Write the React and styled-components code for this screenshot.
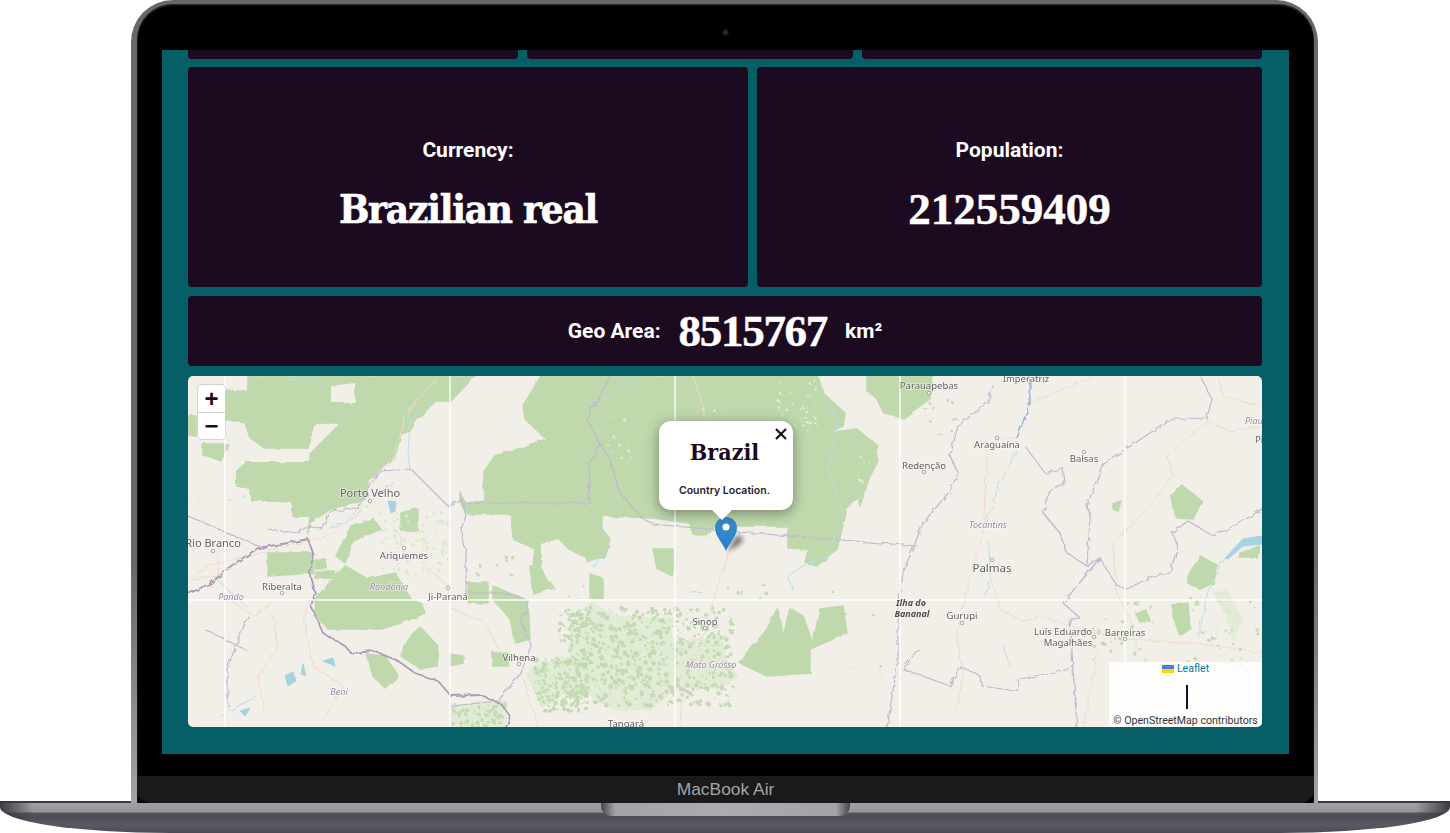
import React from 'react';
import styled, { createGlobalStyle } from 'styled-components';

const GlobalStyle = createGlobalStyle`
  html, body {
    margin: 0;
    background: #fff;
    overflow: hidden;
  }
  body {
    font-family: Roboto, "Liberation Sans", sans-serif;
  }
`;

const Page = styled.div`
  width: 1450px;
  height: 833px;
  overflow: hidden;
`;

const Lid = styled.div`
  position: relative;
  z-index: 1;
  box-sizing: border-box;
  width: 1187px;
  height: 803px;
  margin-left: 131px;
  padding: 4px 4px 0 6px;
  border-radius: 42px 42px 0 0;
  background: linear-gradient(180deg, #67686c 0%, #66676b 70%, #a3a4a8 100%);
`;

const Bezel = styled.div`
  position: relative;
  height: 100%;
  padding-top: 46px;
  box-sizing: border-box;
  border-radius: 36px 36px 0 0;
  background: #000;
  box-shadow: inset 0 1px 2px #3a3a3c;
  display: flex;
  flex-direction: column;
  align-items: center;
`;

const Camera = styled.span`
  position: absolute;
  top: 25px;
  left: 585px;
  width: 7px;
  height: 7px;
  border-radius: 50%;
  background: radial-gradient(circle, #23283a 30%, #0d0d10 70%);
`;

const Screen = styled.div`
  box-sizing: border-box;
  width: 1127px;
  height: 704px;
  padding: 0 27px 27px 26px;
  background: #065f66;
  display: flex;
  flex-direction: column;
  gap: 8px;
`;

const Chin = styled.div`
  margin-top: 22px;
  align-self: stretch;
  flex: 1;
  border-radius: 0 0 14px 14px;
  background: #1a1a1a;
  display: flex;
  align-items: center;
  justify-content: center;
  color: #a4a4a7;
  font-family: "Liberation Sans", Arial, sans-serif;
  font-size: 17.4px;
`;

const Base = styled.div`
  position: relative;
  height: 32px;
  margin-top: -2px;
  border-top: 2px solid #383b41;
  box-sizing: border-box;
  border-radius: 0 0 170px 170px / 0 0 26px 26px;
  background:
    linear-gradient(90deg, #3b3c42 0, rgba(160, 161, 167, 0) 34px, rgba(160, 161, 167, 0) calc(100% - 34px), #3b3c42 100%),
    linear-gradient(180deg, #a0a1a7 0, #94959b 9px, #54555c 10px, #4b4c54 14px, #585962 22px, #4a4b53 100%);
  display: flex;
  justify-content: center;
`;

const Notch = styled.div`
  width: 249px;
  height: 13px;
  border-radius: 0 0 10px 10px;
  background: linear-gradient(90deg, #45464b 0, #a2a3a8 14px, #abacb1 50%, #a2a3a8 calc(100% - 14px), #45464b 100%);
`;

const Clipped = styled.div`
  display: grid;
  grid-template-columns: 330px 326px 1fr;
  gap: 9px;
  height: 9px;
`;

const Stub = styled.div`
  background: #1b0a20;
  border-radius: 0 0 4px 4px;
`;

const Row = styled.div`
  display: grid;
  grid-template-columns: 560px 1fr;
  gap: 9px;
  height: 220px;
`;

const Card = styled.div`
  background: #1b0a20;
  border-radius: 4px;
  color: #fff;
  display: flex;
  flex-direction: column;
  align-items: center;
  justify-content: center;
  gap: 22px;
  padding-top: 18px;
  box-sizing: border-box;
`;

const Label = styled.span`
  font-size: 21px;
  font-weight: 700;
  line-height: 24px;
`;

const Value = styled.span`
  font-family: ${p => (p.$numeric ? '"Liberation Serif"' : '"DejaVu Serif Condensed", "DejaVu Serif"')}, serif;
  font-size: ${p => (p.$numeric ? 45 : 40)}px;
  letter-spacing: ${p => p.$tracking ?? (p.$numeric ? 0 : -1.2)}px;
  font-weight: 700;
  line-height: 50px;
  -webkit-text-stroke: ${p => (p.$numeric ? 0.5 : 0.6)}px #fff;
`;

const GeoCard = styled.div`
  margin-top: 1px;
  height: 70px;
  background: #1b0a20;
  border-radius: 4px;
  color: #fff;
  display: flex;
  align-items: center;
  justify-content: center;
  gap: 18px;
`;

const MapCard = styled.div`
  position: relative;
  margin-top: 2px;
  height: 351px;
  border-radius: 5px;
  overflow: hidden;
  background: #f2efe9;
`;

const MapArt = styled.svg`
  display: block;
  width: 1074px;
  height: 351px;
  filter: blur(0.45px);
`;

const Place = styled.text`
  font-family: "Noto Sans", "Open Sans", sans-serif;
  text-anchor: middle;
  font-size: ${p => p.$size || 9.5}px;
  fill: ${p => p.$color || '#615f5f'};
  font-style: ${p => (p.$italic ? 'italic' : 'normal')};
  font-weight: ${p => (p.$bold ? 700 : 400)};
  stroke: rgba(255, 255, 255, 0.55);
  stroke-width: 1.5px;
  paint-order: stroke;
`;

const ZoomBox = styled.div`
  position: absolute;
  top: 9px;
  left: 10px;
  width: 27px;
  border-radius: 4px;
  background: #fff;
  box-shadow: 0 0 0 1px rgba(0, 0, 0, 0.12);
  display: flex;
  flex-direction: column;
`;

const ZoomButton = styled.div`
  height: 27px;
  display: flex;
  align-items: center;
  justify-content: center;
  color: #1b0a20;
  font-family: "Liberation Sans", sans-serif;
  font-size: 24px;
  font-weight: 700;
  line-height: 1;
  & + & {
    border-top: 1px solid #ccc;
    height: 26px;
  }
`;

const Popup = styled.div`
  position: absolute;
  left: 471px;
  top: 45px;
  box-sizing: border-box;
  width: 134px;
  height: 89px;
  padding-top: 16px;
  border-radius: 12px;
  background: #fff;
  box-shadow: 0 3px 14px rgba(0, 0, 0, 0.4);
  color: #1b0a20;
  display: flex;
  flex-direction: column;
  align-items: center;
  &::after {
    content: '';
    position: absolute;
    left: 56px;
    bottom: -7px;
    width: 14px;
    height: 14px;
    background: #fff;
    transform: rotate(45deg);
  }
`;

const PopupTitle = styled.span`
  font-family: "DejaVu Serif Condensed", "DejaVu Serif", serif;
  font-size: 23px;
  font-weight: 700;
  line-height: 30px;
  margin-left: -3px;
`;

const PopupText = styled.span`
  margin-top: 17px;
  margin-left: -3px;
  font-family: Inter, Roboto, sans-serif;
  font-size: 10.5px;
  font-weight: 600;
  line-height: 14px;
  color: #2a1c31;
`;

const CloseIcon = styled.svg`
  position: absolute;
  top: 6px;
  right: 5px;
  width: 14px;
  height: 14px;
`;

const PinIcon = styled.svg`
  position: absolute;
  left: 526px;
  top: 140px;
  width: 42px;
  height: 38px;
  overflow: visible;
`;

const Attribution = styled.div`
  position: absolute;
  right: 0;
  bottom: 0;
  box-sizing: border-box;
  width: 153px;
  height: 65px;
  background: rgba(255, 255, 255, 0.85);
  display: flex;
  flex-direction: column;
  align-items: center;
  font-size: 10.6px;
  line-height: 13px;
  color: #333;
`;

const LeafletLink = styled.span`
  display: flex;
  align-items: center;
  gap: 3px;
  height: 13px;
  color: #0078a8;
`;

const Flag = styled.svg`
  width: 12px;
  height: 8px;
`;

const Divider = styled.span`
  width: 2px;
  height: 24px;
  margin: 10px 0 5px 2px;
  background: #1b0a20;
`;

const forest = [
  '37,15 60,15 60,0 287,0 263,25 248,25 230,42 222,55 213,58 207,80 190,95 180,107 177,123 143,133 122,147 120,158 122,140 105,140 105,126 63,124 62,112 49,110 49,95 58,87 122,87 122,78 128,72 153,47 128,47 120,72 77,72 62,62 57,47 37,43',
  '49,95 58,87 124,87 124,140 105,140 105,126 63,124 62,112 49,110',
  '353,0 335,30 337,43 358,63 333,72 307,80 295,97 297,125 277,127 273,117 273,128 280,138 323,138 325,163 347,173 345,190 382,188 395,187 410,182 417,182 422,163 414,153 414,140 465,142 502,147 504,157 519,160 527,150 555,150 600,150 600,172 620,173 617,187 629,190 649,173 659,133 675,117 682,90 690,70 669,53 639,57 655,50 657,37 635,17 630,0',
  '679,0 692,0 692,23 679,13',
  '672,62 685,65 690,85 680,105 672,130',
  '677,13 692,0 745,0 742,23 715,42 697,38 689,23',
  '0,40 8,40 8,60 0,60',
  '14,68 40,68 33,85 14,78',
  '80,177 125,177 125,197 80,200',
  '127,184 138,184 138,192 127,192',
  '127,195 147,195 147,202 127,202',
  '127,223 157,190 180,203 207,197 223,223 233,227 237,237 213,247 193,253 140,253 128,240',
  '213,137 230,133 230,155 213,155',
  '163,150 185,143 193,153 165,165 157,187 148,180',
  '217,267 233,252 250,270 248,290 233,293 213,280',
  '178,278 197,280 210,300 197,312 185,300',
  '262,278 275,280 275,287 262,290',
  '280,207 300,207 300,227 280,227',
  '305,210 340,225 342,263 328,267 322,243 305,223',
  '342,190 352,190 366,212 345,218',
  '305,277 320,277 320,290 305,290',
  '402,197 415,203 415,223 402,222',
  '465,173 485,173 485,200 469,193',
  '579,253 589,233 595,260 602,233 615,240 625,267 632,233 655,230 659,257 622,273 622,297 579,300 552,287',
  '982,120 995,110 1014,125 1005,143 989,142',
  '1000,200 1012,180 1030,190 1025,207 1012,213 1000,207',
  '985,230 1000,227 1002,253 992,260 985,240',
  '1052,177 1072,170 1069,182 1052,182',
  '948,238 958,234 961,244 952,246',
  '925,127 933,125 930,135 925,133',
];

const lightForest = [
  '382,253 405,227 425,240 485,243 482,267 532,260 539,287 549,300 529,313 492,310 462,333 425,333 399,317 382,293',
  '1027,217 1039,215 1054,243 1045,263 1039,240',
  '343,293 373,280 400,290 400,320 373,317 353,330 340,300',
  '263,330 317,325 317,351 263,351',
];

const gaps = [
  '143,10 167,7 167,27 143,27',
  '353,168 370,163 382,175 398,182 400,213 380,213 360,205 353,190',
];

const thickBorders = [
  '0,218 23,207 43,190 70,172 100,167 120,163 125,177 122,200 127,217 123,230 135,257 157,270 163,277 187,275 210,285 227,297 250,305 263,320 293,319 313,328 322,340 318,352',
];

const borders = [
  '80,153 110,157 120,150 133,153 143,135 167,133 177,123 182,107 193,95 223,93 243,113 260,130 273,123 278,140 273,153 278,177 278,217 318,217 338,223 340,233 332,243 343,270 333,297 310,325',
  '0,140 70,170',
  '277,127 404,127',
  '412,68 402,87 400,123 404,125',
  '412,68 422,83 432,117 455,143 465,148 539,155 692,167 729,170',
  '412,68 399,43 405,32 422,0',
  '805,10 799,27 770,50 762,80 770,97 762,115 735,147 715,197 710,233 710,283 702,333 699,352',
  '837,70 857,97 875,92 877,107 864,113 855,137 872,157 879,177 899,190 912,182 929,210 939,213 965,200 982,197 990,170 984,157 1000,145 1025,160 1052,147 1074,133',
  '899,190 902,140 899,130 915,87 935,75 965,55 982,43 1019,42 1024,23 1012,0',
  '912,182 875,227 892,242 882,243 885,293 889,352',
  '730,273 715,293 762,310 772,290 792,300 794,310 829,315 832,303 882,293',
  '60,240 40,290 40,330',
  '18,254 58,274',
  '263,330 310,325',
];

const rivers = [
  '405,32 432,13 449,0',
  '243,28 222,45 220,80 222,93',
  '205,105 185,125 160,145 142,152',
  '100,3 130,6 140,10',
  '635,17 650,45 640,90 655,140 638,180 615,190 600,200 605,215',
  '829,75 810,110 805,130 795,150',
  '800,165 803,195 798,220',
  '815,270 822,290',
  '1037,182 1020,215 1010,260',
  '25,200 60,232',
  '30,340 70,320',
  '415,180 405,190',
  '500,215 515,218',
];

const roads = [
  '250,0 217,40 207,80 180,107',
  '176,128 140,160 100,170 20,190 0,205',
  '30,178 30,200 0,205',
  '232,185 260,210',
  '212,158 216,175',
  '127,217 115,240 125,290 140,300 155,310 135,345',
  '85,240 90,270 70,300 77,340',
  '262,232 295,245 312,275',
  '333,297 350,352',
  '40,222 65,240 85,225',
  '799,80 795,157 782,200 769,260 775,300 769,333',
  '829,62 810,60 799,80',
  '802,200 812,233 835,245 855,240 882,250 939,263 1005,267 1074,277',
  '842,27 905,0',
  '1019,45 979,80 985,100 959,133 925,167 929,217 944,247 950,275',
  '1019,45 1040,55 1070,50',
  '1030,0 1035,20 1070,30',
  '542,173 529,213 515,260 494,317 492,352',
  '505,0 519,43',
  '895,352 905,300 910,275',
];

const lakes = [
  '1037,182 1055,163 1074,160 1074,168 1055,170 1040,183',
  '200,125 208,126 207,135 203,137',
  '97,300 105,296 108,305 100,310',
  '115,288 118,300 113,298',
  '52,335 62,332 57,340',
  '135,285 145,282 147,290',
];

const towns = [
  [182, 125], [25, 175], [216, 172], [94, 217], [260, 212], [331, 288], [517, 252],
  [741, 17], [809, 62], [736, 96], [896, 76], [804, 184], [774, 247], [906, 261], [937, 263],
];

const places = [
  { x: 182, y: 121, t: 'Porto Velho', s: 11 },
  { x: 25, y: 171, t: 'Rio Branco', s: 11 },
  { x: 216, y: 183, t: 'Ariquemes' },
  { x: 94, y: 214, t: 'Riberalta' },
  { x: 260, y: 224, t: 'Ji-Paraná' },
  { x: 331, y: 285, t: 'Vilhena' },
  { x: 517, y: 249, t: 'Sinop' },
  { x: 438, y: 351, t: 'Tangará' },
  { x: 741, y: 13, t: 'Parauapebas' },
  { x: 838, y: 6, t: 'Imperatriz' },
  { x: 809, y: 72, t: 'Araguaína' },
  { x: 736, y: 93, t: 'Redenção' },
  { x: 896, y: 86, t: 'Balsas' },
  { x: 804, y: 196, t: 'Palmas', s: 11.5 },
  { x: 774, y: 243, t: 'Gurupi' },
  { x: 875, y: 259, t: 'Luís Eduardo' },
  { x: 880, y: 270, t: 'Magalhães' },
  { x: 937, y: 260, t: 'Barreiras' },
  { x: 1071, y: 67, t: 'Pi' },
  { x: 723, y: 230, t: 'Ilha do', i: true, b: true, c: '#4c4a4a', s: 9 },
  { x: 724, y: 241, t: 'Bananal', i: true, b: true, c: '#4c4a4a', s: 9 },
  { x: 43, y: 224, t: 'Pando', i: true, c: '#a086ac', s: 9 },
  { x: 201, y: 214, t: 'Rondônia', i: true, c: '#a086ac', s: 9 },
  { x: 151, y: 319, t: 'Beni', i: true, c: '#a086ac', s: 9 },
  { x: 523, y: 292, t: 'Mato Grosso', i: true, c: '#a086ac', s: 9 },
  { x: 800, y: 152, t: 'Tocantins', i: true, c: '#a086ac', s: 9 },
  { x: 1067, y: 48, t: 'Piauí', i: true, c: '#a086ac', s: 9 },
];

// small seeded scatter for the speckled farmland patches
function scatter(seed, x0, y0, x1, y1, count, maxR) {
  let s = seed;
  const next = () => {
    s = (s * 16807) % 2147483647;
    return s / 2147483647;
  };
  return Array.from({ length: count }, () => [
    x0 + next() * (x1 - x0),
    y0 + next() * (y1 - y0),
    0.5 + next() * maxR,
  ]);
}

const greenSpecks = [
  ...scatter(11, 382, 232, 545, 330, 620, 2),
  ...scatter(12, 345, 282, 400, 335, 200, 1.8),
  ...scatter(13, 372, 232, 400, 265, 60, 1.6),
  ...scatter(14, 265, 328, 318, 351, 60, 1.8),
  ...scatter(15, 905, 225, 965, 285, 40, 1.5),
  ...scatter(16, 1000, 220, 1070, 300, 50, 1.5),
  ...scatter(17, 738, 25, 772, 60, 14, 1),
  ...scatter(18, 540, 205, 580, 225, 8, 1.5),
  ...scatter(19, 640, 215, 700, 300, 12, 1),
  ...scatter(20, 0, 100, 60, 135, 6, 0.8),
  ...scatter(21, 290, 180, 335, 205, 10, 1.4),
  ...scatter(22, 380, 210, 400, 265, 20, 1.5),
];

const paleSpecks = scatter(31, 193, 133, 262, 200, 120, 1.2);
const whiteSpecks = [
  ...scatter(41, 590, 5, 630, 55, 40, 0.9),
  ...scatter(42, 505, 25, 545, 100, 20, 0.9),
  ...scatter(43, 420, 30, 450, 90, 18, 0.9),
  ...scatter(44, 670, 60, 690, 110, 8, 0.8),
];

function BrazilMap() {
  return (
    <MapArt viewBox="0 0 1074 351">
      <defs>
        <filter id="roughEdge" x="0" y="0" width="100%" height="100%">
          <feTurbulence type="fractalNoise" baseFrequency="0.09" numOctaves="2" seed="4" />
          <feDisplacementMap in="SourceGraphic" scale="3.5" />
        </filter>
        <filter id="wiggle" x="0" y="0" width="100%" height="100%">
          <feTurbulence type="fractalNoise" baseFrequency="0.14" numOctaves="2" seed="9" />
          <feDisplacementMap in="SourceGraphic" scale="5" />
        </filter>
      </defs>
      <g filter="url(#roughEdge)">
        {lightForest.map((p, i) => (
          <polygon key={i} points={p} fill="#e2ebd5" stroke="#e2ebd5" strokeWidth="2" strokeLinejoin="round" />
        ))}
        {forest.map((p, i) => (
          <polygon key={i} points={p} fill="#bfd9ad" stroke="#bfd9ad" strokeWidth="1.5" strokeLinejoin="round" />
        ))}
        {gaps.map((p, i) => (
          <polygon key={i} points={p} fill="#f2efe9" />
        ))}
        {paleSpecks.map(([x, y, r], i) => (
          <circle key={i} cx={x} cy={y} r={r} fill="#dce7cc" />
        ))}
        {greenSpecks.map(([x, y, r], i) => (
          <circle key={i} cx={x} cy={y} r={r} fill="#c3dbb2" />
        ))}
        {whiteSpecks.map(([x, y, r], i) => (
          <circle key={i} cx={x} cy={y} r={r} fill="#e6eedb" />
        ))}
      </g>
      {lakes.map((p, i) => (
        <polygon key={i} points={p} fill="#a6d2e2" stroke="#a6d2e2" strokeLinejoin="round" />
      ))}
      <g fill="none" strokeLinejoin="round" strokeLinecap="round" filter="url(#wiggle)">
        {roads.map((p, i) => (
          <polyline key={i} points={p} stroke="#f3d6cd" strokeWidth="1" />
        ))}
        {rivers.map((p, i) => (
          <polyline key={i} points={p} stroke="#b8dde9" strokeWidth="1" />
        ))}
        {borders.map((p, i) => (
          <polyline key={i} points={p} stroke="#c2b6cc" strokeWidth="1.2" />
        ))}
        {thickBorders.map((p, i) => (
          <polyline key={i} points={p} stroke="#ab9ab4" strokeWidth="1.8" />
        ))}
        <polyline points="842,0 842,27 829,62" stroke="#95add5" strokeWidth="1.3" />
      </g>
      <g stroke="#fff" strokeWidth="1.4" opacity="0.95">
        {[37, 262, 487, 712, 937].map(x => (
          <line key={x} x1={x} y1="0" x2={x} y2="351" />
        ))}
        <line x1="0" y1="224" x2="1074" y2="224" />
      </g>
      {towns.map(([x, y], i) => (
        <circle key={i} cx={x} cy={y} r="1.8" fill="#f5f3ee" stroke="#8a8a8a" strokeWidth="0.7" />
      ))}
      {places.map(p => (
        <Place key={p.t} x={p.x} y={p.y} $size={p.s} $italic={p.i} $bold={p.b} $color={p.c}>
          {p.t}
        </Place>
      ))}
    </MapArt>
  );
}

export default function App() {
  return (
    <Page>
      <GlobalStyle />
      <Lid>
        <Bezel>
          <Camera />
          <Screen>
            <Clipped>
              <Stub />
              <Stub />
              <Stub />
            </Clipped>
            <Row>
              <Card>
                <Label>Currency:</Label>
                <Value>Brazilian real</Value>
              </Card>
              <Card>
                <Label>Population:</Label>
                <Value $numeric>212559409</Value>
              </Card>
            </Row>
            <GeoCard>
              <Label>Geo Area:</Label>
              <Value $numeric $tracking={-1.3}>8515767</Value>
              <Label>km²</Label>
            </GeoCard>
            <MapCard>
              <BrazilMap />
              <ZoomBox>
                <ZoomButton>+</ZoomButton>
                <ZoomButton>−</ZoomButton>
              </ZoomBox>
              <PinIcon viewBox="0 0 42 38">
                <defs>
                  <linearGradient id="pinFill" x1="0" y1="0" x2="0" y2="1">
                    <stop offset="0" stopColor="#3a8ac4" />
                    <stop offset="1" stopColor="#2a80cc" />
                  </linearGradient>
                </defs>
                <path d="M13 35 L22 20 Q29 19 29 24 Q25 31 13 35 Z" fill="#000" opacity="0.5" style={{ filter: 'blur(2.5px)' }} />
                <path
                  d="M12 35 C10 29 1 20 1 12 C1 5 6 1 12 1 C18 1 23 5 23 12 C23 20 14 29 12 35 Z"
                  fill="url(#pinFill)"
                />
                <circle cx="12" cy="11" r="3.5" fill="#fff" />
              </PinIcon>
              <Popup>
                <CloseIcon viewBox="0 0 14 14">
                  <path d="M2 2 L12 12 M12 2 L2 12" stroke="#1b0a20" strokeWidth="2.2" fill="none" />
                </CloseIcon>
                <PopupTitle>Brazil</PopupTitle>
                <PopupText>Country Location.</PopupText>
              </Popup>
              <Attribution>
                <LeafletLink>
                  <Flag viewBox="0 0 12 8">
                    <rect width="12" height="4" fill="#4c7be1" />
                    <rect y="4" width="12" height="4" fill="#ffd500" />
                  </Flag>
                  Leaflet
                </LeafletLink>
                <Divider />
                <span>© OpenStreetMap contributors</span>
              </Attribution>
            </MapCard>
          </Screen>
          <Chin>MacBook Air</Chin>
        </Bezel>
      </Lid>
      <Base>
        <Notch />
      </Base>
    </Page>
  );
}
